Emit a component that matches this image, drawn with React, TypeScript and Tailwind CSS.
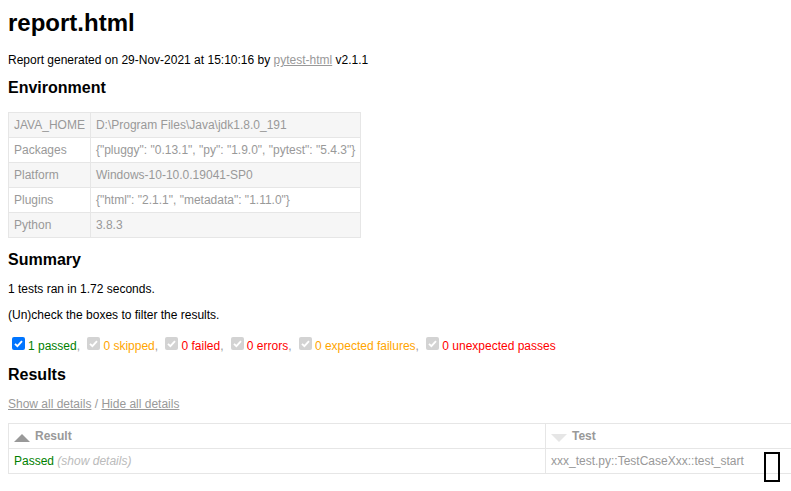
const Check = ({ disabled }: { disabled?: boolean }) => (
  <span
    className={
      disabled
        ? "inline-block w-[13px] h-[13px] ml-[4px] mr-[3px] rounded-[2px] bg-[#d3d3d3] align-baseline"
        : "inline-block w-[13px] h-[13px] ml-[4px] mr-[3px] rounded-[2px] bg-[#0075ff] align-baseline"
    }
  >
    <svg viewBox="0 0 13 13" className="w-[13px] h-[13px] block">
      <path d="M3 6.8l2.4 2.4L10 4.2" fill="none" stroke="white" strokeWidth="1.9" />
    </svg>
  </span>
);

const env = [
  ["JAVA_HOME", "D:\\Program Files\\Java\\jdk1.8.0_191"],
  ["Packages", '{"pluggy": "0.13.1", "py": "1.9.0", "pytest": "5.4.3"}'],
  ["Platform", "Windows-10-10.0.19041-SP0"],
  ["Plugins", '{"html": "2.1.1", "metadata": "1.11.0"}'],
  ["Python", "3.8.3"],
];

const App = () => {
  return (
    <div className="relative w-screen h-screen overflow-hidden bg-white font-['Liberation_Sans',Arial,sans-serif] text-[12px] leading-[14px] text-[#999]">
      <div className="px-2 pt-[9px]">
        <h1 className="text-[24px] leading-[28px] font-bold text-black">report.html</h1>
        <p className="mt-[16px] text-black">
          Report generated on 29-Nov-2021 at 15:10:16 by{" "}
          <a className="text-[#999] underline">pytest-html</a> v2.1.1
        </p>

        <h2 className="mt-[12px] text-[16px] leading-[18px] font-bold text-black">Environment</h2>
        <table className="mt-[15px] border-collapse border border-[#e6e6e6]">
          <tbody>
            {env.map(([k, v], i) => (
              <tr key={k} className={i % 2 === 0 ? "bg-[#f6f6f6]" : "bg-white"}>
                <td className="border border-[#e6e6e6] p-[5px] whitespace-nowrap">{k}</td>
                <td className="border border-[#e6e6e6] p-[5px] whitespace-nowrap">{v}</td>
              </tr>
            ))}
          </tbody>
        </table>

        <h2 className="mt-[13px] text-[16px] leading-[18px] font-bold text-black">Summary</h2>
        <p className="mt-[13px] text-black">1 tests ran in 1.72 seconds. </p>
        <p className="mt-[12px] text-black">(Un)check the boxes to filter the results.</p>
        <div className="mt-[15px] whitespace-nowrap">
          <Check />
          <span className="text-[green]">1 passed</span>,{" "}
          <Check disabled />
          <span className="text-[orange]">0 skipped</span>,{" "}
          <Check disabled />
          <span className="text-[red]">0 failed</span>,{" "}
          <Check disabled />
          <span className="text-[red]">0 errors</span>,{" "}
          <Check disabled />
          <span className="text-[orange]">0 expected failures</span>,{" "}
          <Check disabled />
          <span className="text-[red]">0 unexpected passes</span>
        </div>

        <h2 className="mt-[13px] text-[16px] leading-[18px] font-bold text-black">Results</h2>
        <p className="mt-[13px]">
          <a className="underline">Show all details</a> / <a className="underline">Hide all details</a>
        </p>
        <table className="mt-[12px] w-[1184px] table-fixed border-collapse border border-[#e6e6e6]">
          <colgroup>
            <col className="w-[537px]" />
            <col />
          </colgroup>
          <thead>
            <tr>
              <th className="border border-[#e6e6e6] p-[5px] text-left font-bold">
                <span className="float-left mt-[5px] mr-[5px] w-0 h-0 border-x-[8px] border-x-transparent border-b-[8px] border-b-[#999]" />
                Result
              </th>
              <th className="border border-[#e6e6e6] p-[5px] text-left font-bold">
                <span className="float-left mt-[5px] mr-[5px] w-0 h-0 border-x-[8px] border-x-transparent border-t-[8px] border-t-[#e6e6e6]" />
                Test
              </th>
            </tr>
          </thead>
          <tbody>
            <tr>
              <td className="border border-[#e6e6e6] p-[5px] text-[green]">
                Passed <span className="italic text-[#bbb]">(show details)</span>
              </td>
              <td className="border border-[#e6e6e6] p-[5px]">xxx_test.py::TestCaseXxx::test_start</td>
            </tr>
          </tbody>
        </table>
      </div>
      <span className="absolute left-[764px] top-[452px] w-[16px] h-[30px] border-2 border-black" />
    </div>
  );
};

export default App;
